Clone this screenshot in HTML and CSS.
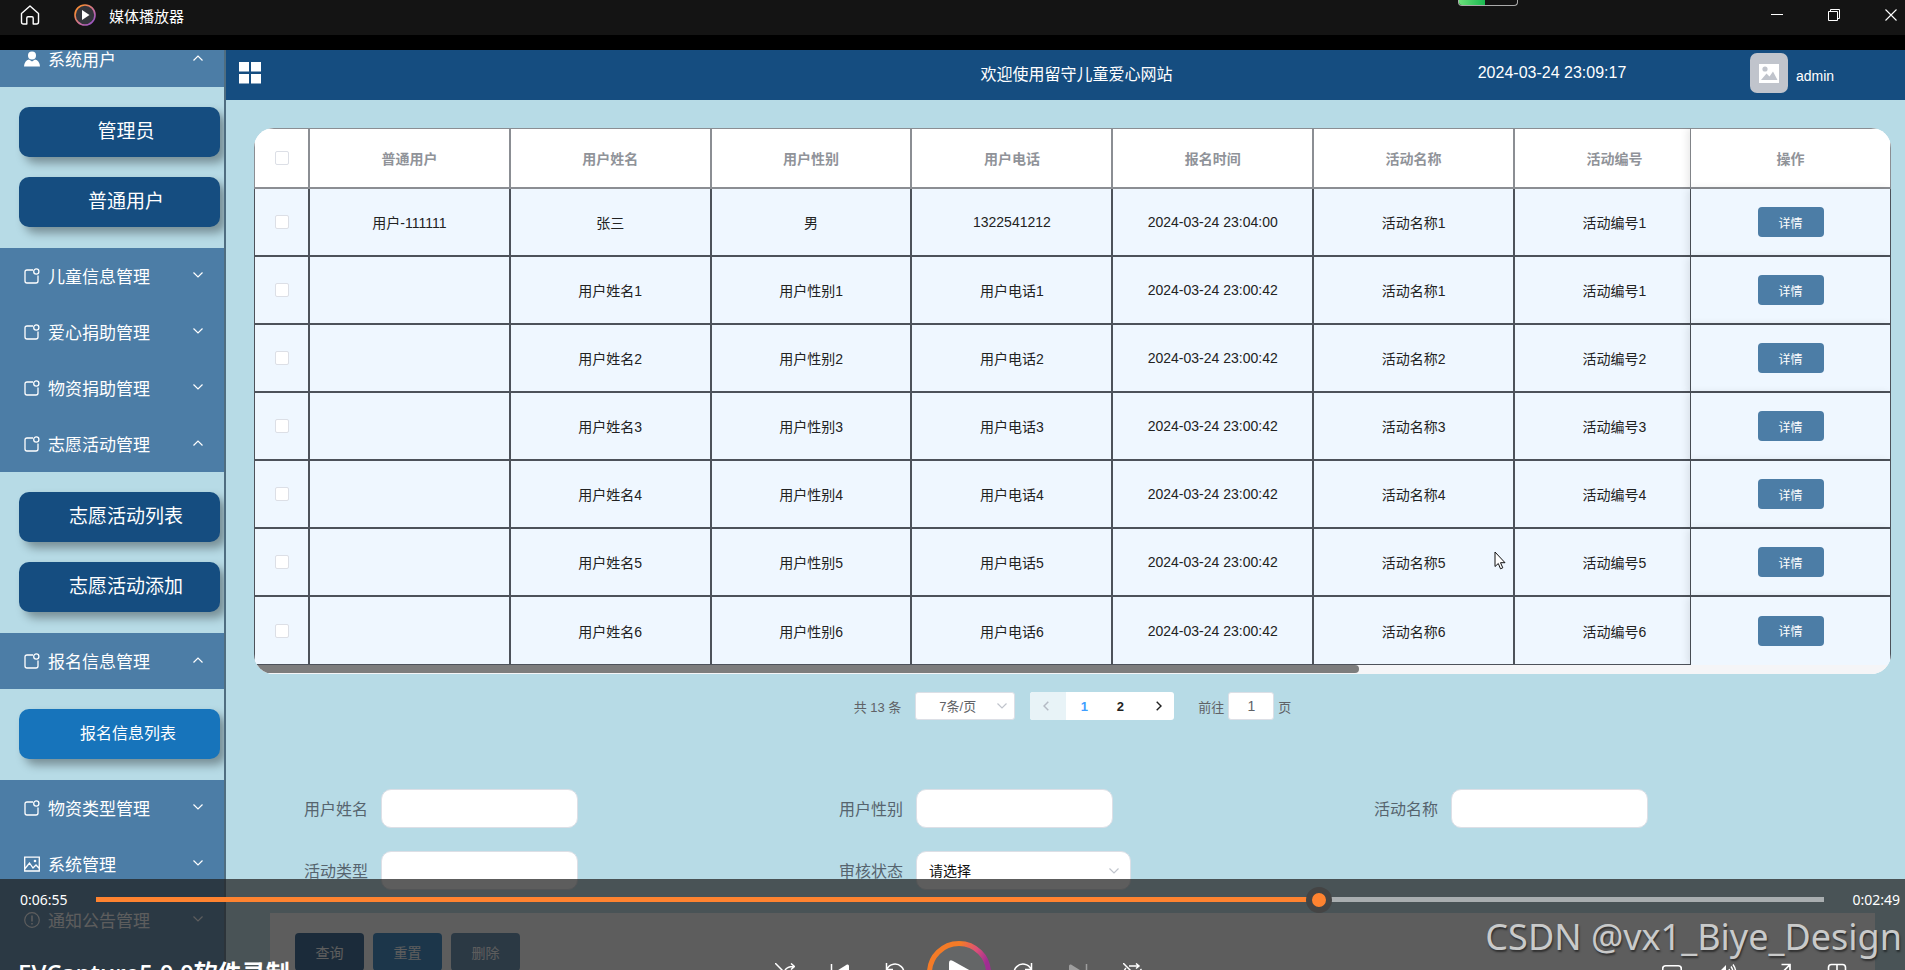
FILE: index.html
```html
<!DOCTYPE html>
<html lang="zh-CN">
<head>
<meta charset="utf-8">
<title>媒体播放器</title>
<link rel="stylesheet" href="styles.css">
</head>
<body>
<svg class="defs" aria-hidden="true">
  <symbol id="i-note" viewBox="0 0 16 16"><path d="M9 2H3Q1 2 1 4V13Q1 15 3 15H12Q14 15 14 13V7.500" fill="none" stroke="currentColor" stroke-width="1.300"/><circle cx="12.300" cy="3.500" r="2.600" fill="none" stroke="currentColor" stroke-width="1.300"/></symbol>
  <symbol id="i-down" viewBox="0 0 10 6"><path d="M.5.5L5 5L9.500.5" fill="none" stroke="currentColor" stroke-width="1.200"/></symbol>
  <symbol id="i-up" viewBox="0 0 10 6"><path d="M.5 5.500L5 1L9.500 5.500" fill="none" stroke="currentColor" stroke-width="1.200"/></symbol>
</svg>

<header class="titlebar">
  <svg class="home" viewBox="0 0 20 20"><path d="M1.500 8.500L10 1l8.500 7.500V17Q18.500 19 16.500 19H13.200V13Q13.200 11.800 12 11.800H8Q6.800 11.800 6.800 13V19H3.500Q1.500 19 1.500 17Z" fill="none" stroke="#fff" stroke-width="1.400" stroke-linejoin="round"/></svg>
  <svg class="logo" viewBox="0 0 22 22"><defs><linearGradient id="ring" x1="0" y1="0" x2="1" y2="1"><stop offset=".2" stop-color="#f58a3c"/><stop offset=".6" stop-color="#c86fa0"/><stop offset="1" stop-color="#8a4bd0"/></linearGradient></defs><circle cx="11" cy="11" r="10" fill="#33353b" stroke="url(#ring)" stroke-width="1.600"/><path d="M8 6L15.500 11L8 16Z" fill="#fff"/></svg>
  <span class="app-name">媒体播放器</span>
  <div class="win-controls">
    <button aria-label="最小化"><svg viewBox="0 0 12 12"><path d="M0 5.500H12" stroke="#fff"/></svg></button>
    <button aria-label="还原"><svg viewBox="0 0 12 12"><path d="M.5 2.500H9.500V11.500H.5ZM2.500 2.500V.5H11.500V9.500H9.500" fill="none" stroke="#fff"/></svg></button>
    <button aria-label="关闭"><svg viewBox="0 0 12 12"><path d="M.5.5L11.500 11.500M11.500.5L.5 11.500" stroke="#fff" stroke-width="1.100"/></svg></button>
  </div>
  <div class="battery"><div class="level"></div></div>
</header>

<div class="stage">
  <nav class="sidebar">
    <a class="item cut" href="#"><svg class="ico" viewBox="0 0 16 16"><circle cx="8" cy="4.500" r="4" fill="#fff"/><path d="M0 15.500Q.5 9.500 5 8.500L8 10.500L11 8.500Q15.500 9.500 16 15.500Z" fill="#fff"/></svg><span>系统用户</span><svg class="arrow"><use href="#i-up"/></svg></a>
    <div class="sub"><a href="#">管理员</a><a href="#">普通用户</a></div>
    <a class="item" href="#"><svg class="ico"><use href="#i-note"/></svg><span>儿童信息管理</span><svg class="arrow"><use href="#i-down"/></svg></a>
    <a class="item" href="#"><svg class="ico"><use href="#i-note"/></svg><span>爱心捐助管理</span><svg class="arrow"><use href="#i-down"/></svg></a>
    <a class="item" href="#"><svg class="ico"><use href="#i-note"/></svg><span>物资捐助管理</span><svg class="arrow"><use href="#i-down"/></svg></a>
    <a class="item" href="#"><svg class="ico"><use href="#i-note"/></svg><span>志愿活动管理</span><svg class="arrow"><use href="#i-up"/></svg></a>
    <div class="sub"><a href="#">志愿活动列表</a><a href="#">志愿活动添加</a></div>
    <a class="item" href="#"><svg class="ico"><use href="#i-note"/></svg><span>报名信息管理</span><svg class="arrow"><use href="#i-up"/></svg></a>
    <div class="sub"><a class="active" href="#">报名信息列表</a></div>
    <a class="item" href="#"><svg class="ico"><use href="#i-note"/></svg><span>物资类型管理</span><svg class="arrow"><use href="#i-down"/></svg></a>
    <a class="item" href="#"><svg class="ico" viewBox="0 0 16 16"><path d="M.7 1.200H15.300V15H.7ZM.7 13L5.500 7L9 12L12 9L15.300 12.500" fill="none" stroke="#fff" stroke-width="1.300"/><circle cx="11" cy="5" r="1.300" fill="#fff"/></svg><span>系统管理</span><svg class="arrow"><use href="#i-down"/></svg></a>
    <a class="item" href="#"><svg class="ico" viewBox="0 0 16 16"><circle cx="8" cy="8" r="7.300" fill="none" stroke="#fff" stroke-width="1.200"/><path d="M8 3.500V9.500M8 11V12.500" stroke="#fff" stroke-width="1.500"/></svg><span>通知公告管理</span><svg class="arrow"><use href="#i-down"/></svg></a>
  </nav>

  <main class="main">
    <header class="topbar">
      <button class="grid-btn" aria-label="菜单"><svg viewBox="0 0 22 22"><path d="M0 0H10V9.500H0ZM12 0H22V9.500H12ZM0 12H10V21.500H0ZM12 12H22V21.500H12Z" fill="#fff"/></svg></button>
      <h1>欢迎使用留守儿童爱心网站</h1>
      <time>2024-03-24 23:09:17</time>
      <div class="user"><svg viewBox="0 0 38 40"><rect width="38" height="40" rx="7" fill="#c0c4cc"/><path d="M9 11H29V30H9Z" fill="#fff"/><circle cx="15" cy="16" r="2.600" fill="#c0c4cc"/><path d="M11 27L16.500 20.500L19.500 23.500L23 18.500L27.500 27Z" fill="#c0c4cc"/></svg><span>admin</span></div>
    </header>

    <div class="content">
      <div class="table-wrap">
        <table>
          <colgroup><col class="c-check"><col><col><col><col><col><col><col class="c-last"><col class="c-act"></colgroup>
          <thead><tr><th><input type="checkbox" aria-label="全选"></th><th>普通用户</th><th>用户姓名</th><th>用户性别</th><th>用户电话</th><th>报名时间</th><th>活动名称</th><th>活动编号</th><th>操作</th></tr></thead>
          <tbody>
            <tr><td><input type="checkbox" aria-label="选择"></td><td>用户-111111</td><td>张三</td><td>男</td><td>1322541212</td><td>2024-03-24 23:04:00</td><td>活动名称1</td><td>活动编号1</td><td><button>详情</button></td></tr>
            <tr><td><input type="checkbox" aria-label="选择"></td><td></td><td>用户姓名1</td><td>用户性别1</td><td>用户电话1</td><td>2024-03-24 23:00:42</td><td>活动名称1</td><td>活动编号1</td><td><button>详情</button></td></tr>
            <tr><td><input type="checkbox" aria-label="选择"></td><td></td><td>用户姓名2</td><td>用户性别2</td><td>用户电话2</td><td>2024-03-24 23:00:42</td><td>活动名称2</td><td>活动编号2</td><td><button>详情</button></td></tr>
            <tr><td><input type="checkbox" aria-label="选择"></td><td></td><td>用户姓名3</td><td>用户性别3</td><td>用户电话3</td><td>2024-03-24 23:00:42</td><td>活动名称3</td><td>活动编号3</td><td><button>详情</button></td></tr>
            <tr><td><input type="checkbox" aria-label="选择"></td><td></td><td>用户姓名4</td><td>用户性别4</td><td>用户电话4</td><td>2024-03-24 23:00:42</td><td>活动名称4</td><td>活动编号4</td><td><button>详情</button></td></tr>
            <tr><td><input type="checkbox" aria-label="选择"></td><td></td><td>用户姓名5</td><td>用户性别5</td><td>用户电话5</td><td>2024-03-24 23:00:42</td><td>活动名称5</td><td>活动编号5</td><td><button>详情</button></td></tr>
            <tr><td><input type="checkbox" aria-label="选择"></td><td></td><td>用户姓名6</td><td>用户性别6</td><td>用户电话6</td><td>2024-03-24 23:00:42</td><td>活动名称6</td><td>活动编号6</td><td><button>详情</button></td></tr>
          </tbody>
        </table>
        <div class="scroll"><div class="thumb"></div></div>
      </div>

      <div class="pagination">
        <span>共 13 条</span>
        <div class="select page-size"><select aria-label="每页条数"><option>7条/页</option></select><svg class="arrow"><use href="#i-down"/></svg></div>
        <div class="pager">
          <button class="prev" aria-label="上一页" disabled><svg viewBox="0 0 6 10"><path d="M5.300.7L1 5L5.300 9.300" fill="none" stroke="currentColor" stroke-width="1.500"/></svg></button>
          <button class="current">1</button>
          <button>2</button>
          <button class="next" aria-label="下一页"><svg viewBox="0 0 6 10"><path d="M.7.7L5 5L.7 9.300" fill="none" stroke="currentColor" stroke-width="1.400"/></svg></button>
        </div>
        <label class="jump">前往<input type="text" value="1">页</label>
      </div>

      <form class="search">
        <div class="field"><label for="f1">用户姓名</label><input id="f1" type="text"></div>
        <div class="field"><label for="f2">用户性别</label><input id="f2" type="text"></div>
        <div class="field"><label for="f3">活动名称</label><input id="f3" type="text"></div>
        <div class="field"><label for="f4">活动类型</label><input id="f4" type="text"></div>
        <div class="field"><label for="f5">审核状态</label><div class="select status"><select id="f5"><option>请选择</option></select><svg class="arrow"><use href="#i-down"/></svg></div></div>
      </form>

      <div class="actions"><button>查询</button><button class="reset">重置</button><button class="delete">删除</button></div>
    </div>
  </main>

  <svg class="cursor" viewBox="0 0 12 19"><path d="M1 1V15.500L4.300 12.500L6.500 17.800L8.800 16.800L6.500 11.700H11Z" fill="#fff" stroke="#111" stroke-width="1"/></svg>

  <section class="player">
    <div class="timeline"><time>0:06:55</time><input type="range" min="0" max="584" value="415" aria-label="播放进度"><time>0:02:49</time></div>
    <div class="controls">
      <h2>EVCapture5.0.0软件录制</h2>
      <div class="center">
        <button aria-label="随机播放"><svg viewBox="0 0 20 20"><path d="M0 0L20 20M0 15H3Q6 15 8 11M10 7Q13 3 19 3.500M16 .5L19.500 3.500L16 6.500M12 13Q14 16 19 15" fill="none" stroke="#fff" stroke-width="1.500"/></svg></button>
        <button aria-label="上一个"><svg viewBox="0 0 20 20"><path d="M1.500 1V19" stroke="#fff" stroke-width="1.500"/><path d="M19 3Q19 1 17 1.500L5 9Q4 10 5 11L17 18.500Q19 19 19 17Z" fill="#fff"/></svg></button>
        <button aria-label="后退"><svg viewBox="0 0 20 20"><path d="M1.500 0V6.500H8M1.800 6.200A9 9 0 1 1 1 11" fill="none" stroke="#fff" stroke-width="1.500"/></svg></button>
        <button class="play" aria-label="播放"><svg viewBox="0 0 64 64"><defs><linearGradient id="pring" x1="0" y1="0" x2="1" y2=".5"><stop offset=".42" stop-color="#f47b27"/><stop offset=".68" stop-color="#dc5078"/><stop offset=".9" stop-color="#a02d92"/></linearGradient></defs><circle cx="32" cy="32" r="29.500" fill="#646667" stroke="url(#pring)" stroke-width="5"/><path d="M22 22Q22 18 26 20L44 30Q47 32 44 34L26 44Q22 46 22 42Z" fill="#fff"/></svg></button>
        <button aria-label="前进"><svg viewBox="0 0 20 20"><path d="M18.500 0V6.500H12M18.200 6.200A9 9 0 1 0 19 11" fill="none" stroke="#fff" stroke-width="1.500"/></svg></button>
        <button class="dim" aria-label="下一个"><svg viewBox="0 0 20 20"><path d="M18.500 1V19" stroke="#fff" stroke-width="1.500"/><path d="M1 3Q1 1 3 1.500L15 9Q16 10 15 11L3 18.500Q1 19 1 17Z" fill="#fff"/></svg></button>
        <button aria-label="重复播放"><svg viewBox="0 0 20 20"><path d="M0 0L20 20M6 3H16M13 .5L16 3L13 5.500M3 5Q1 7 1 10Q1 15 5 15.500H12M17.500 6Q19 8 19 11" fill="none" stroke="#fff" stroke-width="1.500"/></svg></button>
      </div>
      <div class="right">
        <button aria-label="字幕"><svg viewBox="0 0 20 20"><rect x=".7" y="2.700" width="18.600" height="14" rx="3" fill="none" stroke="#fff" stroke-width="1.600"/></svg></button>
        <button aria-label="音量"><svg viewBox="0 0 20 20"><path d="M1 7H4L9 2V17L4 13H1Z" fill="#fff"/><path d="M12 6Q14 9.500 12 13M14 3.500Q18 9.500 14 15.500M16 1.500Q21.500 9.500 16 17.500" fill="none" stroke="#fff" stroke-width="1.400"/></svg></button>
        <button aria-label="全屏"><svg viewBox="0 0 20 20"><path d="M9.500 1.500H18V10M18 1.500L2 18M2 10V18H10" fill="none" stroke="#fff" stroke-width="1.700"/></svg></button>
        <button aria-label="迷你播放器"><svg viewBox="0 0 20 20"><rect x="1.500" y="1.500" width="17" height="17" rx="3" fill="none" stroke="#fff" stroke-width="1.600"/><path d="M10 1.500V10H18.500" fill="none" stroke="#fff" stroke-width="1.600"/></svg></button>
      </div>
    </div>
  </section>
  <div class="watermark">CSDN @vx1_Biye_Design</div>
</div>
</body>
</html>
```
FILE: styles.css
```css
* { box-sizing: border-box; }
body {
  margin: 0;
  height: 100vh;
  display: flex;
  flex-direction: column;
  gap: 15px;
  overflow: hidden;
  background: #000;
  font-family: "Liberation Sans", "Noto Sans CJK SC", sans-serif;
  font-size: 14px;
}
button, input, select { font-family: inherit; font-size: inherit; }
button { border: 0; padding: 0; background: none; color: inherit; }
a { color: inherit; text-decoration: none; }
svg { display: block; flex: none; }
.defs { position: absolute; width: 0; height: 0; }
.arrow { width: 10px; height: 6px; }

/* window title bar */
.titlebar {
  position: relative;
  flex: none;
  display: flex;
  align-items: center;
  height: 35px;
  padding: 0 8px 5px 20px;
  background: #141414;
  color: #fff;
}
.home { width: 20px; height: 20px; }
.logo { width: 22px; height: 22px; margin-left: 34px; }
.app-name { margin-left: 13px; font-size: 15px; }
.win-controls { display: flex; gap: 45px; margin-left: auto; }
.win-controls svg { width: 12px; height: 12px; }
.battery {
  position: absolute;
  top: 0;
  right: 387px;
  width: 60px;
  height: 6px;
  border: 1px solid #aaa;
  border-top: 0;
  border-radius: 0 0 4px 4px;
  overflow: hidden;
}
.level { width: 26px; height: 5px; background: linear-gradient(90deg, #6be07a, #19b850); }

.stage { position: relative; flex: 1; min-height: 0; display: flex; overflow: hidden; background: #b7dbe6; }

/* side menu */
.sidebar { flex: none; width: 226px; border-right: 2px solid #4f6d80; overflow: hidden; background: #4c7da6; color: #fff; }
.item {
  display: flex;
  align-items: center;
  height: 56px;
  padding: 0 21px 2px 24px;
  font-size: 17px;
}
.item.cut { height: 37px; padding-bottom: 21px; }
.item span { margin: 0 auto 0 8px; }
.ico { width: 16px; height: 16px; margin-top: 2px; }
.sub { display: grid; gap: 20px; padding: 20px 4px 21px 19px; background: #b7dbe6; overflow: hidden; }
.sub a {
  height: 50px;
  line-height: 50px;
  padding-left: 13px;
  border-radius: 10px;
  background: #154d80;
  box-shadow: 6px 6px 10px rgba(0, 0, 0, .35);
  text-align: center;
  font-size: 19px;
}
.sub a.active { background: #1774bb; font-size: 16px; padding-left: 17px; }

/* page header */
.main { flex: 1; min-width: 0; }
.topbar {
  display: grid;
  grid-template-columns: 573fr 555fr 396fr 155fr;
  align-items: center;
  height: 50px;
  padding-bottom: 4px;
  background: #154d80;
  color: #fff;
  font-size: 16px;
}
.topbar h1 { margin: 0; font-size: 16px; font-weight: 400; text-align: center; }
.topbar time { text-align: center; }
.grid-btn { margin-left: 13px; justify-self: start; }
.grid-btn svg { width: 22px; height: 22px; }
.user { display: flex; align-items: center; gap: 8px; font-size: 14px; }
.user svg { width: 38px; height: 40px; }
.user span { padding-top: 6px; }
.content { padding: 28px 14px 0 28px; }

/* data table */
.table-wrap { border-radius: 20px; overflow: hidden; background: #fff; }
table { width: 100%; table-layout: fixed; border-spacing: 0; color: #222; }
.c-check { width: 56px; }
.c-last { width: 176px; }
.c-act { width: 200px; }
th, td { padding: 0; text-align: center; border: solid #4d525a; border-width: 0 2px 2px 0; white-space: nowrap; }
th { height: 61px; border-color: #8b8e93; border-top-width: 1px; color: #909399; background: #fff; }
td { height: 68px; background: #eff7ff; }
th:first-child, td:first-child { border-left-width: 1px; }
th:nth-child(8), td:nth-child(8) { padding-left: 24px; border-right-width: 1px; }
th:last-child, td:last-child { border-right-width: 1px; box-shadow: -3px 0 8px rgba(0, 0, 0, .1); }
tr:last-child td { border-bottom-width: 1px; }
tr:last-child td:last-child { border-bottom-color: #eff7ff; }
input[type="checkbox"] {
  appearance: none;
  display: block;
  width: 14px;
  height: 14px;
  margin: 0 auto;
  border: 1px solid #dcdfe6;
  border-radius: 2px;
  background: #fff;
}
td button { width: 66px; height: 30px; border-radius: 4px; background: #4c7da6; color: #fff; font-size: 12px; }
.scroll { height: 9px; background: #f5f5f7; }
.thumb { width: 67.5%; height: 8px; border-radius: 0 4px 4px 0; background: #7d7d7d; }

/* pagination */
.pagination { display: flex; justify-content: center; align-items: center; margin-top: 18px; color: #606266; font-size: 13px; }
.select { display: flex; align-items: center; background: #fff; border: 1px solid #dcdfe6; }
.select select { appearance: none; flex: 1; min-width: 0; border: 0; padding: 0; background: transparent; color: inherit; }
.select .arrow { color: #c0c4cc; }
.page-size { width: 100px; height: 28px; margin: 0 15px 0 14px; padding: 0 7px 0 23px; border-radius: 3px; }
.pager { display: flex; height: 28px; border-radius: 3px; overflow: hidden; background: #fff; color: #222; }
.pager button { width: 36px; font-weight: 700; display: grid; place-items: center; }
.pager svg { width: 6px; height: 10px; }
.pager .prev { background: #e8f3f7; color: #b4bac4; padding-right: 4px; }
.pager .next { padding-left: 6px; }
.pager .current { color: #409eff; }
.jump { display: flex; align-items: center; gap: 4px; margin-left: 24px; }
.jump input { width: 46px; height: 28px; padding: 0; border: 1px solid #dcdfe6; border-radius: 3px; text-align: center; color: #606266; font-size: 14px; }

/* search form */
.search { display: grid; grid-template-columns: repeat(3, 1fr); gap: 23px 0; margin: 69px 16px 23px; color: #56646e; font-size: 16px; }
.field { display: flex; align-items: center; gap: 13px; padding-left: 34px; }
.field label { padding-bottom: 2px; }
.field input { width: 197px; height: 39px; border: 1px solid #dcdfe6; border-radius: 10px; padding: 0 12px; background: #fff; }
.status { width: 215px; height: 39px; padding: 0 11px 0 12px; border-radius: 10px; color: #111; font-size: 14px; }

.actions { display: flex; gap: 9px; margin: 0 16px; padding: 20px 25px; background: #fff; color: #fff; }
.actions button { width: 69px; height: 38px; border-radius: 4px; background: #154d80; }
.actions .reset { background: #1774bb; }
.actions .delete { background: #4c7da6; }

.cursor { position: absolute; left: 1494px; top: 501px; width: 12px; height: 19px; }

/* media player overlay */
.player {
  position: absolute;
  left: 0;
  right: 0;
  bottom: 0;
  height: 91px;
  overflow: hidden;
  background: rgba(30, 30, 30, .72);
  color: #fff;
}
.timeline { display: flex; align-items: center; height: 41px; padding: 0 5px 0 20px; gap: 28px; font-family: "Noto Sans", sans-serif; }
.timeline input {
  appearance: none;
  flex: 1;
  min-width: 0;
  height: 26px;
  margin: 0;
  background: linear-gradient(90deg, #ff8330 71%, #a9aeb0 71%) center / 100% 5px no-repeat;
}
.timeline input::-webkit-slider-thumb {
  appearance: none;
  width: 26px;
  height: 26px;
  border: 6px solid #444;
  border-radius: 50%;
  background: #ff8330;
}
.controls { display: grid; grid-template-columns: 1fr auto 1fr; align-items: center; height: 64px; margin-top: 21px; padding: 0 5px 0 18px; }
.controls h2 { margin: 0; font: 600 24px/32px "Open Sans", "Noto Sans CJK SC", sans-serif; }
.center, .right { display: flex; align-items: center; }
.center button, .right button { display: grid; place-items: center; width: 55px; }
.center .play { width: 73px; }
.right { justify-content: flex-end; padding-right: 36px; }
.controls svg { width: 20px; height: 20px; }
.controls .play svg { width: 64px; height: 64px; }
.dim { opacity: .4; }

.watermark {
  position: absolute;
  right: 3px;
  bottom: 9px;
  color: #c9caca;
  font: 36px/49px "Noto Sans", sans-serif;
  text-shadow: 1px 2px 2px rgba(0, 0, 0, .5);
}
```
